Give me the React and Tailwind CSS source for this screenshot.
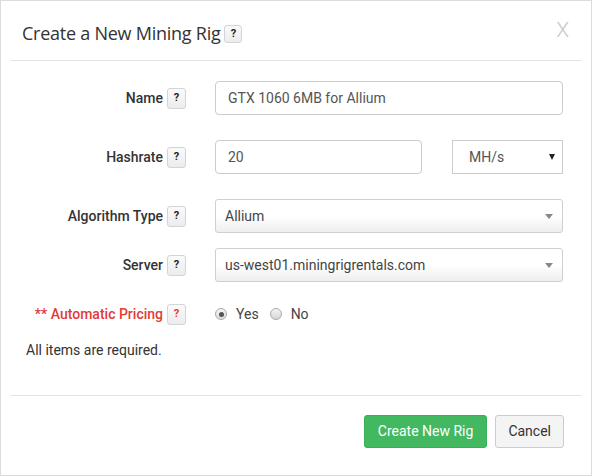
import React from "react"

const roboto = { fontFamily: "Roboto, 'Liberation Sans', sans-serif" }

function Help({ red }) {
  return (
    <span
      className={`ml-[4px] inline-flex h-[21px] w-[19px] items-center justify-center rounded-[3px] border border-[#d4d4d4] bg-gradient-to-b from-[#fafafa] to-[#ececec] text-[11px] font-bold ${
        red ? "text-[#e33b36]" : "text-[#222]"
      }`}
    >
      ?
    </span>
  )
}

function Row({ label, red, children, className }) {
  return (
    <div className={`flex items-center ${className}`}>
      <div className="flex w-[185px] items-center justify-end">
        <span className={`text-[14px] font-medium ${red ? "text-[#e33b36]" : "text-[#333]"}`}>{label}</span>
        <Help red={red} />
      </div>
      <div className="ml-[29px] flex w-[348px] items-center">{children}</div>
    </div>
  )
}

function Select2({ value }) {
  return (
    <div className="flex h-[34px] w-full items-center justify-between rounded-[3px] border border-[#cfcfcf] bg-gradient-to-b from-white from-50% to-[#eeeeee] pl-[9px] pr-[9px] text-[14px] text-[#444]">
      <span>{value}</span>
      <span className="h-0 w-0 border-x-[4px] border-t-[5px] border-x-transparent border-t-[#888]" />
    </div>
  )
}

export default function App() {
  return (
    <div
      className="flex h-[476px] w-[592px] flex-col border border-[#dcdcdc] bg-white"
      style={roboto}
    >
      {/* header */}
      <div className="mx-[9px] flex h-[60px] items-center justify-between border-b border-[#e5e5e5] pl-[12px] pr-[13px]">
        <div className="flex items-center pt-[4px]">
          <span
            className="text-[18px] leading-none tracking-[-0.25px] text-[#333]"
            style={{ fontFamily: "'Open Sans', sans-serif" }}
          >
            Create a New Mining Rig
          </span>
          <span className="ml-[4px] mt-[3px] inline-flex h-[18px] w-[18px] items-center justify-center rounded-[3px] border border-[#d4d4d4] bg-gradient-to-b from-[#fafafa] to-[#ececec] text-[11px] font-bold text-[#222]">
            ?
          </span>
        </div>
        <span className="text-[21px] font-light leading-none text-[#c8c8c8]">X</span>
      </div>

      {/* body */}
      <div className="flex-1 pt-[20px]">
        <Row label="Name" className="mb-[25px]">
          <div className="flex h-[34px] w-full items-center rounded-[4px] border border-[#ccc] pl-[12px] text-[14px] text-[#555]">
            GTX 1060 6MB for Allium
          </div>
        </Row>

        <Row label="Hashrate" className="mb-[25px]">
          <div className="flex h-[34px] w-[207px] items-center rounded-[4px] border border-[#ccc] pl-[12px] text-[14px] text-[#555]">
            20
          </div>
          <div className="ml-auto flex h-[34px] w-[111px] items-center justify-between border border-[#ccc] pl-[16px] pr-[7px] text-[14px] text-[#555]">
            <span>MH/s</span>
            <span className="h-0 w-0 border-x-[3.5px] border-t-[6px] border-x-transparent border-t-[#222]" />
          </div>
        </Row>

        <Row label="Algorithm Type" className="mb-[15px]">
          <Select2 value="Allium" />
        </Row>

        <Row label="Server" className="mb-[15px]">
          <Select2 value="us-west01.miningrigrentals.com" />
        </Row>

        <Row label="** Automatic Pricing" red className="h-[34px]">
          <div className="flex items-center text-[14px] text-[#444]">
            <span className="flex h-[12px] w-[12px] items-center justify-center rounded-full border border-[#aaa] bg-gradient-to-b from-[#f4f4f4] to-[#dcdcdc]">
              <span className="h-[5px] w-[5px] rounded-full bg-[#555]" />
            </span>
            <span className="ml-[9px]">Yes</span>
            <span className="ml-[11px] h-[12px] w-[12px] rounded-full border border-[#aaa] bg-gradient-to-b from-[#f4f4f4] to-[#d6d6d6]" />
            <span className="ml-[9px]">No</span>
          </div>
        </Row>

        <p className="ml-[25px] mt-[9px] text-[14px] leading-[20px] text-[#333]">All items are required.</p>
      </div>

      {/* footer */}
      <div className="mx-[9px] flex h-[80px] items-start justify-end gap-[8px] border-t border-[#e5e5e5] pr-[18px] pt-[19px]">
        <button className="h-[33px] rounded-[3px] border border-[#3aae58] bg-[#42b960] px-[13px] text-[14px] text-white">
          Create New Rig
        </button>
        <button className="h-[33px] rounded-[3px] border border-[#ccc] bg-[#f4f4f4] px-[12px] text-[14px] text-[#333]">
          Cancel
        </button>
      </div>
    </div>
  )
}
